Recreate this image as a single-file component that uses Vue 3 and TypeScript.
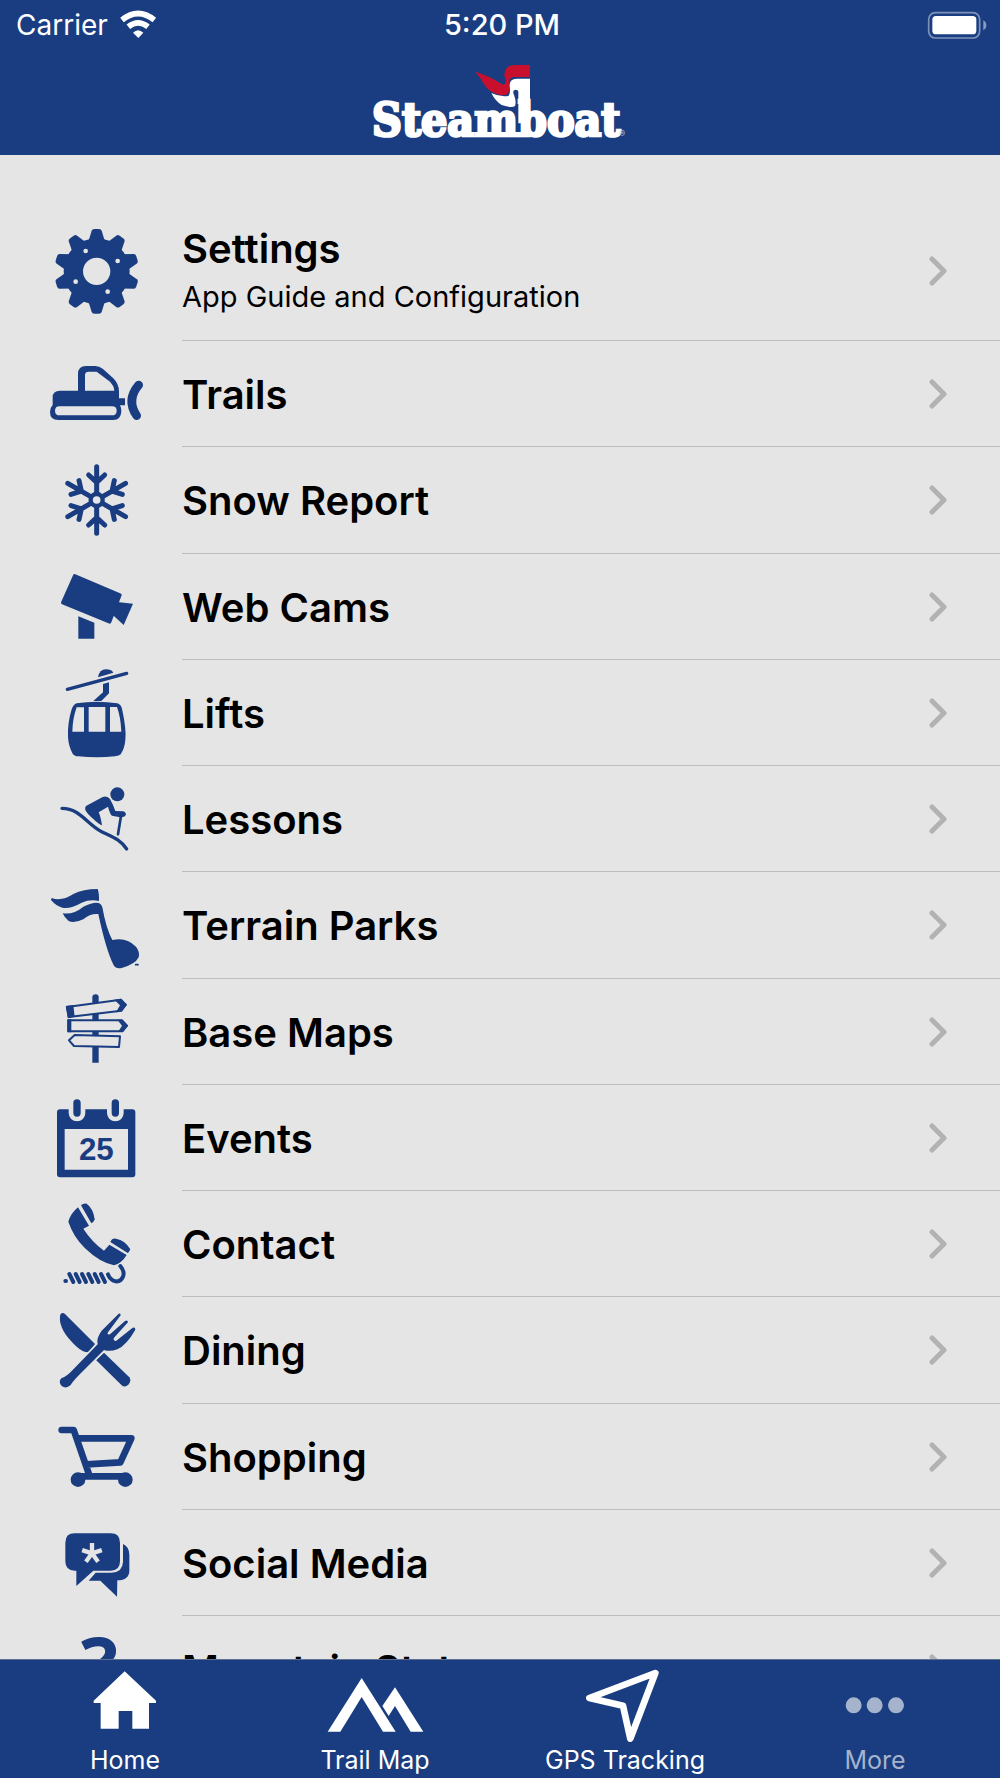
<script setup lang="ts">
interface Shape {
  d?: string
  stroke?: number
  paper?: boolean
  butt?: boolean
  turns?: number[]
  origin?: string
  text?: string
  x?: number
  y?: number
  size?: number
  family?: string
}

interface Item {
  title: string
  subtitle?: string
  top: number
  shapes: Shape[]
}

interface Tab {
  label: string
  viewBox: string
  d: string
  outline?: boolean
  active?: boolean
}

const circle = (cx: number, cy: number, r: number): string =>
  `M${cx - r} ${cy}a${r} ${r} 0 1 0 ${2 * r} 0a${r} ${r} 0 1 0 ${-2 * r} 0Z`

const steps = (count: number): number[] =>
  Array.from({ length: count }, (_, i) => (360 / count) * i)

const items: Item[] = [
  {
    title: 'Settings',
    subtitle: 'App Guide and Configuration',
    top: 27,
    shapes: [
      { d: circle(200, 184, 99) },
      { d: 'M174 98L185 62Q187 57 193 57H207Q213 57 215 62L226 98Z', turns: steps(10), origin: '200 184' },
      { d: circle(200, 184, 41), paper: true },
      { d: circle(167, 123, 7) + circle(263, 153, 7) + circle(137, 215, 7) + circle(233, 245, 7), paper: true },
    ],
  },
  {
    title: 'Trails',
    top: 396,
    shapes: [
      { d: 'M68 585V562Q68 542 90 542H144V492Q144 468 168 468H195Q208 468 218 476L250 505Q267 522 267 545V565H285V586H270Q275 595 274 605Q272 630 250 630H85Q60 630 60 606Q60 593 68 585Z' },
      { d: 'M165 542V495Q165 485 176 485H200L238 514Q252 527 253 542Z', paper: true },
      { d: 'M89 589H246Q260 589 260 602Q260 616 246 616H89Q75 616 75 602Q75 589 89 589Z', paper: true },
      { d: 'M326 525Q288 570 320 617', stroke: 26 },
    ],
  },
  {
    title: 'Snow Report',
    top: -6,
    shapes: [
      { d: circle(200, 150, 18), stroke: 13 },
      { d: 'M200 50V128M176 75L200 97L224 75', stroke: 15, turns: steps(6), origin: '200 150' },
    ],
  },
  {
    title: 'Web Cams',
    top: 315,
    shapes: [
      { d: 'M134 377L270 435L239 516L98 458Z' },
      { d: 'M134 377L270 435L239 516L98 458Z', stroke: 10 },
      { d: 'M255 455L309 461L281 525L246 493Z' },
      { d: 'M145 499L193 518V566H145Z' },
    ],
  },
  {
    title: 'Lifts',
    top: 33,
    shapes: [
      { d: 'M112 118L290 70', stroke: 10 },
      { d: 'M204 82Q208 58 228 58Q244 58 250 68Z' },
      { d: 'M219 102L237 97V130L214 153H190L219 127Z' },
      { d: 'M140 160Q200 150 262 160Q272 163 276 176Q290 240 286 270Q284 295 272 313Q268 318 255 319Q200 325 145 319Q132 318 128 311Q116 290 114 262Q112 220 125 178Q130 163 140 160Z' },
      { d: 'M140 172H162V245H127Q128 205 140 172ZM176 171H226V245H176ZM240 171H261Q272 200 274 245H240Z', paper: true },
    ],
  },
  {
    title: 'Lessons',
    top: 351,
    shapes: [
      { d: 'M96 475C150 475 170 522 215 545C250 562 270 568 290 597', stroke: 10 },
      { d: circle(262, 433, 21) },
      { d: 'M168 468L218 441Q232 436 240 447Q250 465 256 483L280 484Q290 488 287 496Q283 502 270 502L246 497Q240 493 234 470L206 487Q212 500 216 526Q205 522 190 507Q172 492 166 480Q164 472 168 468Z' },
      { d: 'M273 498L264 553', stroke: 8 },
    ],
  },
  {
    title: 'Terrain Parks',
    top: 9,
    shapes: [
      { d: 'M65 84Q95 95 130 72Q160 57 203 57Q208 70 207 93Q180 87 155 98Q120 118 97 113Q78 108 63 90Z' },
      { d: 'M98 130Q130 135 160 110Q190 96 205 99Q214 101 217 112Q228 175 247 210Q290 200 318 230Q330 245 326 262Q316 283 275 294Q258 298 251 286Q228 240 205 132Q180 130 160 148Q130 162 115 152Q103 142 98 130Z' },
      { d: 'M317 284H324', stroke: 5 },
    ],
  },
  {
    title: 'Base Maps',
    top: 330,
    shapes: [
      { d: 'M187 392V382Q187 373 197 373Q206 373 206 382V578H187Z' },
      { d: 'M111 411L272 389L287 404L274 422L116 441ZM115 451H276L291 467L277 484H115ZM134 495L270 499L267 531L132 528L117 511Z', paper: true },
      { d: 'M111 411L272 389L287 404L274 422L116 441ZM115 451H276L291 467L277 484H115ZM134 495L270 499L267 531L132 528L117 511Z', stroke: 6 },
      { d: 'M107 408L130 405L134 440L114 445ZM112 448H124V487H112Z' },
      { d: 'M253 389L274 386L291 404L276 424L258 427L270 406ZM262 449H278L294 467L279 486H264L276 467Z' },
    ],
  },
  {
    title: 'Events',
    top: 18,
    shapes: [
      { d: 'M90 88H307Q316 88 316 97V283Q316 292 307 292H90Q81 292 81 283V97Q81 88 90 88Z' },
      { d: 'M104 147H294V269H104Z', paper: true },
      { d: 'M141 69V99M256 69V99', stroke: 50, paper: true },
      { d: 'M141 69V99M256 69V99', stroke: 22 },
      { text: '25', x: 199, y: 239, size: 94, family: 'Liberation Sans, Arial, sans-serif' },
    ],
  },
  {
    title: 'Contact',
    top: 336,
    shapes: [
      { d: 'M144 382Q122 400 115 425Q130 470 165 505Q210 548 252 556Q275 550 290 525L238 494L222 512Q185 485 160 446L177 437Z' },
      { d: 'M153 376Q160 369 170 371Q190 385 194 418Q192 426 184 430Z' },
      { d: 'M241 486Q246 474 258 476Q285 480 301 508Q298 516 293 519Z' },
      { d: 'M271 558Q285 575 279 590Q272 606 257 604Q240 600 234 583', stroke: 12 },
      { d: 'M106 603H108M118 582L130 606M137 582L149 606M156 582L168 606M175 582L187 606M194 582L206 606M213 582L225 606', stroke: 12 },
    ],
  },
  {
    title: 'Dining',
    top: -6,
    shapes: [
      { d: 'M92 42Q98 36 105 42L195 132L176 157Q160 158 140 140Q85 90 90 48Z' },
      { d: 'M198 180L222 158L298 232Q305 242 296 253Q285 265 275 256Z' },
      { d: 'M203 133L128 210M222 150L150 222', stroke: 10, paper: true },
      { d: 'M266 41Q272 38 272 46L235 95Q228 105 240 103L285 63Q293 58 294 67L252 113Q248 122 258 123L308 83Q316 80 316 89Q290 135 262 148Q240 156 222 150L150 222Q130 242 122 255Q108 268 95 258Q84 246 94 235Q112 228 128 210L203 133Q198 115 215 92Z' },
    ],
  },
  {
    title: 'Shopping',
    top: 315,
    shapes: [
      { d: 'M95 390H131L176 520M143 415H304L271 487L170 493', stroke: 20 },
      { d: 'M144 529H286', stroke: 20 },
      { d: circle(144, 539, 22) + circle(286, 539, 22) },
    ],
  },
  {
    title: 'Social Media',
    top: 33,
    shapes: [
      { d: 'M134 100H242Q270 100 270 128V184Q270 212 242 212H190L139 258V212H134Q106 212 106 184V128Q106 100 134 100Z' },
      { d: 'M279 132Q298 140 298 165V212Q298 240 262 241L261 290L211 242H176L197 218H245Q278 216 279 185Z' },
      { d: 'M186 160V129', stroke: 13, paper: true, butt: true, turns: steps(5), origin: '186 160' },
    ],
  },
  {
    title: 'Mountain Stats',
    top: 351,
    shapes: [{ text: '?', x: 208, y: 578, size: 232, family: 'Open Sans, Noto Sans, sans-serif' }],
  },
]

const tabs: Tab[] = [
  {
    label: 'Home',
    viewBox: '210 69 330 246',
    d: 'M374 94L468 182V189H447V266H397V213H356V266H302V189H281V182Z',
  },
  {
    label: 'Trail Map',
    viewBox: '960 69 330 246',
    d: 'M1085 114L1187 275H1149L1085 171L1021 275H983ZM1185 142L1270 275H1232L1185 198L1166 228L1147 198Z',
  },
  {
    label: 'GPS Tracking',
    viewBox: '210 489 330 246',
    d: 'M466 519L268 594L369 617L391 716Z',
    outline: true,
  },
  {
    label: 'More',
    viewBox: '960 489 330 246',
    d: circle(1061, 616, 24) + circle(1124, 616, 24) + circle(1188, 616, 24),
    active: true,
  },
]
</script>

<template>
  <div class="app">
    <header class="header">
      <div class="status">
        <div class="carrier">
          <span>Carrier</span>
          <svg class="wifi" viewBox="355 24 120 96" aria-hidden="true">
            <path d="M367 57Q415 18 464 57" />
            <path d="M386 77Q415 54 445 77" />
            <path class="solid" d="M400 95Q415 80 431 95L416 111Z" />
          </svg>
        </div>
        <time class="time">5:20 PM</time>
        <div class="power">
          <svg class="battery" viewBox="1280 27 186 90" aria-hidden="true">
            <rect class="shell" x="1288" y="35" width="153" height="76" rx="20" />
            <rect class="charge" x="1299" y="45" width="132" height="55" rx="11" />
            <path class="cap" d="M1452 58Q1461 63 1461 73Q1461 83 1452 88Z" />
          </svg>
        </div>
      </div>
      <svg class="logo" viewBox="0 0 840 300" role="img" aria-label="Steamboat">
        <path class="ribbon" d="M345 65Q390 78 425 102Q438 108 437 90Q428 70 440 54Q448 45 465 45H510V81H460Q448 84 447 100Q450 125 443 132Q430 140 410 132Q385 125 372 102Q360 80 345 65Z" />
        <path class="mast" d="M394 129Q420 142 445 138Q452 132 449 108Q447 87 470 86H510V220H475V125Q475 119 465 119Q456 122 462 135Q470 155 465 168Q455 175 425 165Q405 152 394 129Z" />
        <text class="wordmark" x="36" y="258">Steamboat</text>
        <text class="registered" x="778" y="261">®</text>
      </svg>
    </header>

    <main class="content">
      <ul class="list">
        <li v-for="item in items" :key="item.title" class="cell">
          <a class="link" href="#">
            <svg class="icon" :viewBox="`0 ${item.top} 420 315`" aria-hidden="true">
              <template v-for="(shape, i) in item.shapes" :key="i">
                <text
                  v-if="shape.text"
                  class="glyph"
                  :x="shape.x"
                  :y="shape.y"
                  :font-size="shape.size"
                  :font-family="shape.family"
                >{{ shape.text }}</text>
                <template v-else>
                  <path
                    v-for="turn in shape.turns ?? [0]"
                    :key="turn"
                    :d="shape.d"
                    :class="[shape.stroke ? 'line' : 'fill', { paper: shape.paper, butt: shape.butt }]"
                    :stroke-width="shape.stroke"
                    :transform="shape.origin ? `rotate(${turn} ${shape.origin})` : undefined"
                  />
                </template>
              </template>
            </svg>
            <span class="body">
              <span class="labels">
                <span class="title">{{ item.title }}</span>
                <span v-if="item.subtitle" class="subtitle">{{ item.subtitle }}</span>
              </span>
              <svg class="chevron" viewBox="0 0 18 30" aria-hidden="true">
                <path d="M3 3L15 15L3 27" />
              </svg>
            </span>
          </a>
        </li>
      </ul>
    </main>

    <nav class="tabs">
      <a v-for="tab in tabs" :key="tab.label" class="tab" :class="{ active: tab.active }" href="#">
        <svg class="tab-icon" :viewBox="tab.viewBox" aria-hidden="true">
          <path :class="{ outline: tab.outline }" :d="tab.d" />
        </svg>
        <span>{{ tab.label }}</span>
      </a>
    </nav>
  </div>
</template>

<style>
body {
  margin: 0;
}
</style>

<style scoped>
.app {
  --navy: #193d80;
  --paper: #e5e5e5;
  display: flex;
  flex-direction: column;
  height: 100vh;
  background: var(--paper);
  color: #000;
  font-family: Inter, Roboto, sans-serif;
}

.header {
  flex: none;
  display: flex;
  flex-direction: column;
  align-items: center;
  padding-bottom: 5px;
  background: var(--navy);
  color: #fff;
}

.status {
  display: grid;
  grid-template-columns: 1fr auto 1fr;
  align-items: center;
  align-self: stretch;
  height: 50px;
  padding: 0 12px 0 16px;
  font-size: 28px;
  line-height: 34px;
}

.carrier {
  display: flex;
  align-items: center;
  gap: 10px;
}

.wifi {
  width: 40px;
  height: 32px;
  fill: none;
  stroke: #fff;
  stroke-width: 17;
}

.wifi .solid {
  fill: #fff;
  stroke: none;
}

.time {
  font-size: 29px;
  font-weight: 500;
}

.power {
  display: flex;
  justify-content: flex-end;
}

.battery {
  width: 62px;
  height: 30px;
}

.shell {
  fill: none;
  stroke: #7f93b8;
  stroke-width: 5;
}

.charge {
  fill: #fff;
}

.cap {
  fill: #8a9cbe;
}

.logo {
  width: 280px;
  height: 100px;
}

.ribbon {
  fill: #c8102e;
}

.mast {
  fill: #fff;
}

.wordmark {
  fill: #fff;
  stroke: #fff;
  stroke-width: 8;
  font-family: "DejaVu Serif Condensed", "DejaVu Serif", serif;
  font-size: 138px;
  font-weight: 700;
}

.registered {
  fill: #b8c4d9;
  font-size: 26px;
}

.content {
  flex: 1;
  min-height: 0;
  overflow: hidden auto;
  scrollbar-width: none;
}

.list {
  display: grid;
  grid-template-rows: 140px;
  grid-auto-rows: 106px 107px 106px 106px;
  margin: 0;
  padding: 46px 0 0;
  list-style: none;
}

.cell {
  display: flex;
}

.link {
  flex: 1;
  display: flex;
  align-items: center;
  gap: 12px;
  padding-left: 30px;
  color: inherit;
  text-decoration: none;
}

.icon {
  flex: none;
  width: 140px;
  height: 105px;
}

.fill,
.glyph {
  fill: var(--navy);
}

.fill.paper {
  fill: var(--paper);
}

.line {
  fill: none;
  stroke: var(--navy);
  stroke-linecap: round;
  stroke-linejoin: round;
}

.line.paper {
  stroke: var(--paper);
}

.line.butt {
  stroke-linecap: butt;
}

.glyph {
  font-weight: 700;
  text-anchor: middle;
}

.body {
  flex: 1;
  align-self: stretch;
  display: flex;
  align-items: center;
  justify-content: space-between;
  padding-right: 53px;
  border-bottom: 1px solid #bcbcbe;
}

.labels {
  display: flex;
  flex-direction: column;
  padding-top: 2px;
}

.title {
  font-size: 40px;
  font-weight: 600;
  line-height: 50px;
}

.subtitle {
  font-size: 29px;
  line-height: 46px;
}

.chevron {
  width: 18px;
  height: 30px;
  fill: none;
  stroke: #b2b2b4;
  stroke-width: 5;
  stroke-linecap: round;
  stroke-linejoin: round;
}

.tabs {
  flex: none;
  display: grid;
  grid-template-columns: repeat(4, 1fr);
  height: 115px;
  padding-top: 3px;
  border-top: 1px solid #5f7193;
  background: var(--navy);
}

.tab {
  display: flex;
  flex-direction: column;
  align-items: center;
  color: #fff;
  font-size: 25px;
  line-height: 30px;
  text-decoration: none;
}

.tab.active {
  color: #a6b3cd;
}

.tab-icon {
  width: 110px;
  height: 82px;
  fill: currentColor;
}

.outline {
  fill: none;
  stroke: currentColor;
  stroke-width: 20;
  stroke-linejoin: round;
}
</style>
